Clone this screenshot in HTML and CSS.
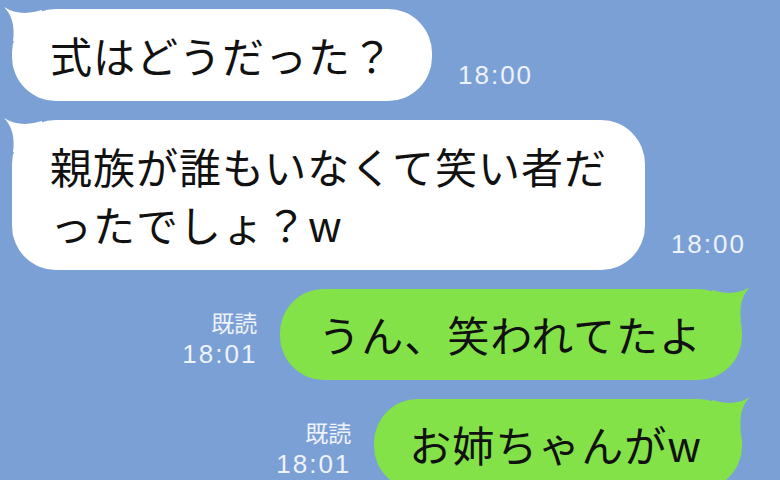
FILE: index.html
```html
<!DOCTYPE html>
<html lang="ja">
<head>
  <meta charset="UTF-8" />
  <title>トーク</title>
  <link rel="stylesheet" href="styles.css">
</head>
<body>
  <div class="chat">

    <div class="row left">
      <div class="bubble white">
        <svg class="tail" viewBox="-10 -4 42 36"><path d="M -8 -2 Q 8 8 30 1 L 30 32 L 1 32 Q 4 10 -8 -2 Z"/></svg>
        式はどうだった？
      </div>
      <div class="meta"><span class="time">18:00</span></div>
    </div>

    <div class="row left">
      <div class="bubble white">
        <svg class="tail" viewBox="-10 -4 42 36"><path d="M -8 -2 Q 8 8 30 1 L 30 32 L 1 32 Q 4 10 -8 -2 Z"/></svg>
        親族が誰もいなくて笑い者だ<br>ったでしょ？w
      </div>
      <div class="meta"><span class="time">18:00</span></div>
    </div>

    <div class="row right">
      <div class="meta">
        <span class="read">既読</span>
        <span class="time">18:01</span>
      </div>
      <div class="bubble green">
        <svg class="tail" viewBox="-32 -4 42 36"><path d="M 8 -2 Q -8 8 -30 1 L -30 32 L -1 32 Q -4 10 8 -2 Z"/></svg>
        うん、笑われてたよ
      </div>
    </div>

    <div class="row right">
      <div class="meta">
        <span class="read">既読</span>
        <span class="time">18:01</span>
      </div>
      <div class="bubble green last">
        <svg class="tail" viewBox="-32 -4 42 36"><path d="M 8 -2 Q -8 8 -30 1 L -30 32 L -1 32 Q -4 10 8 -2 Z"/></svg>
        お姉ちゃんがw
      </div>
    </div>

  </div>
</body>
</html>
```

FILE: styles.css
```css
html, body {
  margin: 0;
  height: 100%;
  overflow: hidden;
}
body {
  background: #7ba0d5;
  font-family: "Noto Sans CJK JP", "Liberation Sans", sans-serif;
}
.chat {
  display: flex;
  flex-direction: column;
  gap: 19px;
  padding: 9px 38px 0 12px;
}
.row {
  display: flex;
  align-items: flex-end;
}
.row.right {
  justify-content: flex-end;
}
.bubble {
  position: relative;
  font-size: 42px;
  line-height: 58px;
  letter-spacing: 1px;
  color: #111;
  padding: 17px 38px;
  border-radius: 44px;
  white-space: nowrap;
}
.bubble.white {
  background: #fff;
}
.bubble.green {
  background: #84e249;
  padding: 16px 40px 17px 38px;
}
.bubble.last {
  padding-left: 35px;
  padding-right: 40px;
}
.tail {
  position: absolute;
  top: -4px;
  width: 42px;
  height: 36px;
}
.white .tail {
  left: -10px;
  fill: #fff;
}
.green .tail {
  right: -10px;
  fill: #84e249;
}
.meta {
  display: flex;
  flex-direction: column;
  color: #eef2fa;
  font-size: 24px;
  line-height: 32px;
  padding-bottom: 10px;
}
.left .meta {
  margin-left: 26px;
}
.right .meta {
  align-items: flex-end;
  margin-right: 23px;
}
.time {
  font-family: "Liberation Sans", sans-serif;
  font-size: 26px;
  letter-spacing: 2px;
}
.read {
  font-size: 23px;
}
```
